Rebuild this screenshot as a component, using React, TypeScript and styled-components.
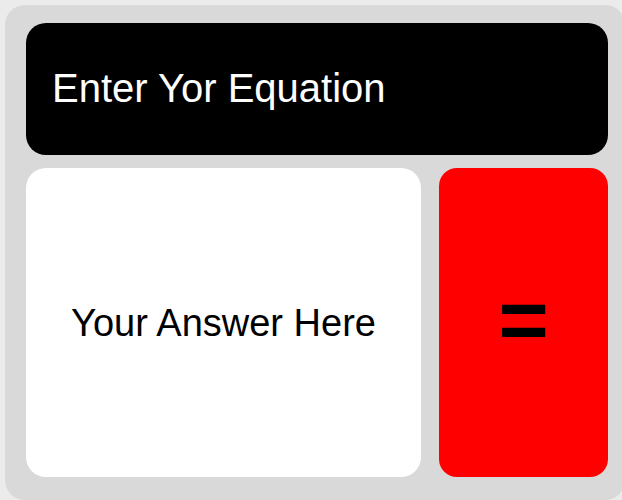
import styled, { createGlobalStyle } from 'styled-components'

const GlobalStyle = createGlobalStyle`
  html, body {
    margin: 0;
    padding: 0;
    background: #ebebeb;
    overflow: hidden;
    font-family: 'Liberation Sans', Arial, sans-serif;
  }
`

export default function App() {
  return (
    <>
      <GlobalStyle />
      <Calculator>
        <EquationInput placeholder="Enter Yor Equation" />
        <BottomRow>
          <AnswerBox>Your Answer Here</AnswerBox>
          <EqualsButton>=</EqualsButton>
        </BottomRow>
      </Calculator>
    </>
  )
}

const Calculator = styled.div`
  box-sizing: border-box;
  margin: 5px;
  width: 620px;
  height: 495px;
  padding: 18px 17px 23px 21px;
  background-color: #d9d9d9;
  border-radius: 20px;
  display: grid;
  grid-template-rows: 132px 1fr;
  row-gap: 13px;
`

const EquationInput = styled.input`
  box-sizing: border-box;
  width: 582px;
  height: 132px;
  border: none;
  outline: none;
  border-radius: 20px;
  background-color: #000;
  color: #fff;
  font-family: 'Liberation Sans', Arial, sans-serif;
  font-size: 40px;
  padding: 0 0 2px 26px;

  &::placeholder {
    color: #fff;
    opacity: 1;
  }
`

const BottomRow = styled.div`
  display: grid;
  grid-template-columns: 395px 169px;
  column-gap: 18px;
`

const AnswerBox = styled.div`
  display: flex;
  align-items: center;
  justify-content: center;
  background-color: #fff;
  border-radius: 20px;
  color: #000;
  font-size: 38px;
  padding-top: 2px;
`

const EqualsButton = styled.button`
  display: flex;
  align-items: center;
  justify-content: center;
  border: none;
  border-radius: 18px;
  background-color: #ff0000;
  color: #000;
  font-family: 'Liberation Sans', Arial, sans-serif;
  font-weight: bold;
  font-size: 86px;
  padding: 0 0 6px;
  cursor: pointer;
`
